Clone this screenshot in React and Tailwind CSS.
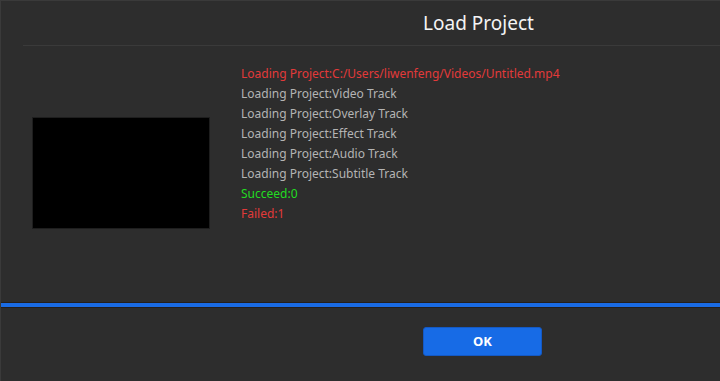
import React from 'react';

const lines = [
  { text: 'Loading Project:C:/Users/liwenfeng/Videos/Untitled.mp4', color: 'text-[#e23a3a]' },
  { text: 'Loading Project:Video Track', color: 'text-[#b4b4b4]' },
  { text: 'Loading Project:Overlay Track', color: 'text-[#b4b4b4]' },
  { text: 'Loading Project:Effect Track', color: 'text-[#b4b4b4]' },
  { text: 'Loading Project:Audio Track', color: 'text-[#b4b4b4]' },
  { text: 'Loading Project:Subtitle Track', color: 'text-[#b4b4b4]' },
  { text: 'Succeed:0', color: 'text-[#22dc22]' },
  { text: 'Failed:1', color: 'text-[#e23a3a]' },
];

export default function App() {
  return (
    <div
      className="w-[720px] h-[381px] bg-[#2d2d2d] border-l border-t border-[#3a3a3a] flex flex-col overflow-hidden"
      style={{ fontFamily: '"Noto Sans", "DejaVu Sans", sans-serif' }}
    >
      {/* header */}
      <div className="h-[44px] flex shrink-0">
        <div className="w-[240px] shrink-0" />
        <div className="flex-1 flex items-center justify-center text-[19px] text-[#f4f4f4] pt-[1px] pr-[4px]">
          Load Project
        </div>
      </div>
      <div className="ml-[22px] h-px bg-[#3a3a3a] shrink-0" />

      {/* body */}
      <div className="flex flex-1">
        <div className="w-[240px] shrink-0 flex items-center justify-center pb-[3px]">
          <div className="w-[178px] h-[112px] bg-black border border-[#1e1e1e]" />
        </div>
        <div className="flex-1 pt-[18px] text-[12px] leading-[20px]">
          {lines.map((l, i) => (
            <div key={i} className={l.color}>{l.text}</div>
          ))}
        </div>
      </div>

      {/* progress */}
      <div className="h-[6px] bg-[#1a6be4] border-y border-[#241f1c] shrink-0" />

      {/* footer */}
      <div className="h-[73px] flex shrink-0">
        <div className="w-[240px] shrink-0" />
        <div className="flex-1 flex justify-center pt-[19px] pl-[4px]">
          <button className="w-[119px] h-[29px] bg-[#176be6] border border-[#1459c4] rounded-[3px] text-white text-[13px] font-bold">
            OK
          </button>
        </div>
      </div>
    </div>
  );
}
